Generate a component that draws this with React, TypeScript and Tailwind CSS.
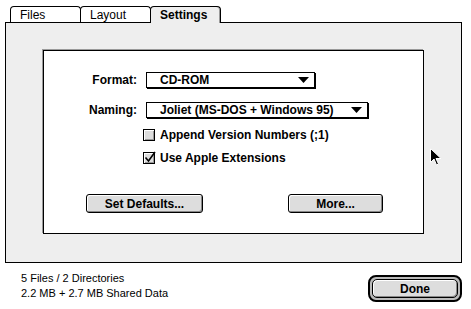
import React from 'react';

const chicago = { fontFamily: '"Liberation Sans", Arial, sans-serif' };

function Tab({ label, active = false }: { label: string; active?: boolean }) {
  return (
    <div
      className={`relative h-[16px] w-[71px] -mr-px border border-b-0 border-black rounded-t-[4px] pl-[9px] pt-px text-[12px] leading-[15px] text-black ${
        active ? 'z-10 bg-[#eeeeee] font-bold h-[17px] -mb-px shadow-[inset_-1px_0_0_#999]' : 'bg-white'
      }`}
    >
      {label}
    </div>
  );
}

function Popup({ value, width }: { value: string; width: string }) {
  return (
    <div
      className={`${width} h-[16px] flex items-center justify-between border border-black bg-white shadow-[1px_1px_0_#000] pl-[13px] pr-[5px] text-[12px] font-bold`}
    >
      <span className="leading-none">{value}</span>
      <svg width="11" height="6" viewBox="0 0 11 6">
        <path d="M0 0h11L5.5 6z" fill="#000" />
      </svg>
    </div>
  );
}

function Checkbox({ label, checked = false }: { label: string; checked?: boolean }) {
  return (
    <div className="flex items-center gap-[5px] h-[14px]">
      <div className="w-[12px] h-[12px] border border-black bg-[#dddddd] shadow-[inset_1px_1px_0_#fff,inset_-1px_-1px_0_#999] relative">
        {checked && (
          <svg className="absolute -top-[2px] left-0" width="12" height="13" viewBox="0 0 12 13">
            <path d="M1.5 6.5l3 3.5L11 1" stroke="#000" strokeWidth="1.6" fill="none" />
          </svg>
        )}
      </div>
      <span className="text-[12px] font-bold leading-none">{label}</span>
    </div>
  );
}

function Button({ label, width }: { label: string; width: string }) {
  return (
    <div
      className={`${width} h-[19px] flex items-center justify-center border border-black rounded-[3px] bg-[#dddddd] shadow-[inset_1px_1px_0_#fff,inset_-1px_-1px_0_#888] text-[12px] font-bold`}
    >
      {label}
    </div>
  );
}

export default function App() {
  return (
    <div className="relative w-[471px] h-[309px] bg-white text-black overflow-hidden" style={chicago}>
      {/* Tab strip */}
      <div className="flex pt-[6px] pl-[10px]">
        <Tab label="Files" />
        <Tab label="Layout" />
        <Tab label="Settings" active />
      </div>

      {/* Tab panel */}
      <div className="ml-[5px] w-[457px] h-[241px] border border-black bg-[#eeeeee] pt-[27px] pl-[37px]">
        <div className="w-[381px] h-[184px] border border-black bg-white shadow-[-1px_-1px_0_#999] pt-[20px]">
          <div className="flex items-center">
            <div className="w-[93px] text-right text-[12px] font-bold">Format:</div>
            <div className="ml-[9px]">
              <Popup value="CD-ROM" width="w-[169px]" />
            </div>
          </div>
          <div className="flex items-center mt-[12px]">
            <div className="w-[93px] text-right text-[12px] font-bold">Naming:</div>
            <div className="ml-[9px]">
              <Popup value="Joliet (MS-DOS + Windows 95)" width="w-[222px]" />
            </div>
          </div>
          <div className="pl-[99px] mt-[9px] flex flex-col gap-[9px]">
            <Checkbox label="Append Version Numbers (;1)" />
            <Checkbox label="Use Apple Extensions" checked />
          </div>
          <div className="flex mt-[29px] pl-[42px] gap-[85px]">
            <Button label="Set Defaults..." width="w-[117px]" />
            <Button label="More..." width="w-[95px]" />
          </div>
        </div>
      </div>

      {/* Footer */}
      <div className="flex justify-between pl-[21px] pr-[9px]">
        <div className="mt-[8px] text-[11px] leading-[15px]">
          <div>5 Files / 2 Directories</div>
          <div>2.2 MB + 2.7 MB Shared Data</div>
        </div>
        <div className="mt-[12px] w-[94px] h-[27px] border-2 border-black rounded-[8px] bg-[#bbbbbb] p-[2px]">
          <div className="w-full h-full border border-black rounded-[5px] bg-[#dddddd] shadow-[inset_1px_1px_0_#fff,inset_-1px_-1px_0_#888] flex items-center justify-center text-[12px] font-bold">
            Done
          </div>
        </div>
      </div>

      {/* Mouse pointer */}
      <svg className="absolute left-[430px] top-[148px]" width="12" height="18" viewBox="0 0 12 18">
        <path d="M0.5 0.5v14l3.5-3.5 2.5 6 2-1-2.5-5.5h5z" fill="#000" stroke="#fff" strokeWidth="1" />
      </svg>
    </div>
  );
}
